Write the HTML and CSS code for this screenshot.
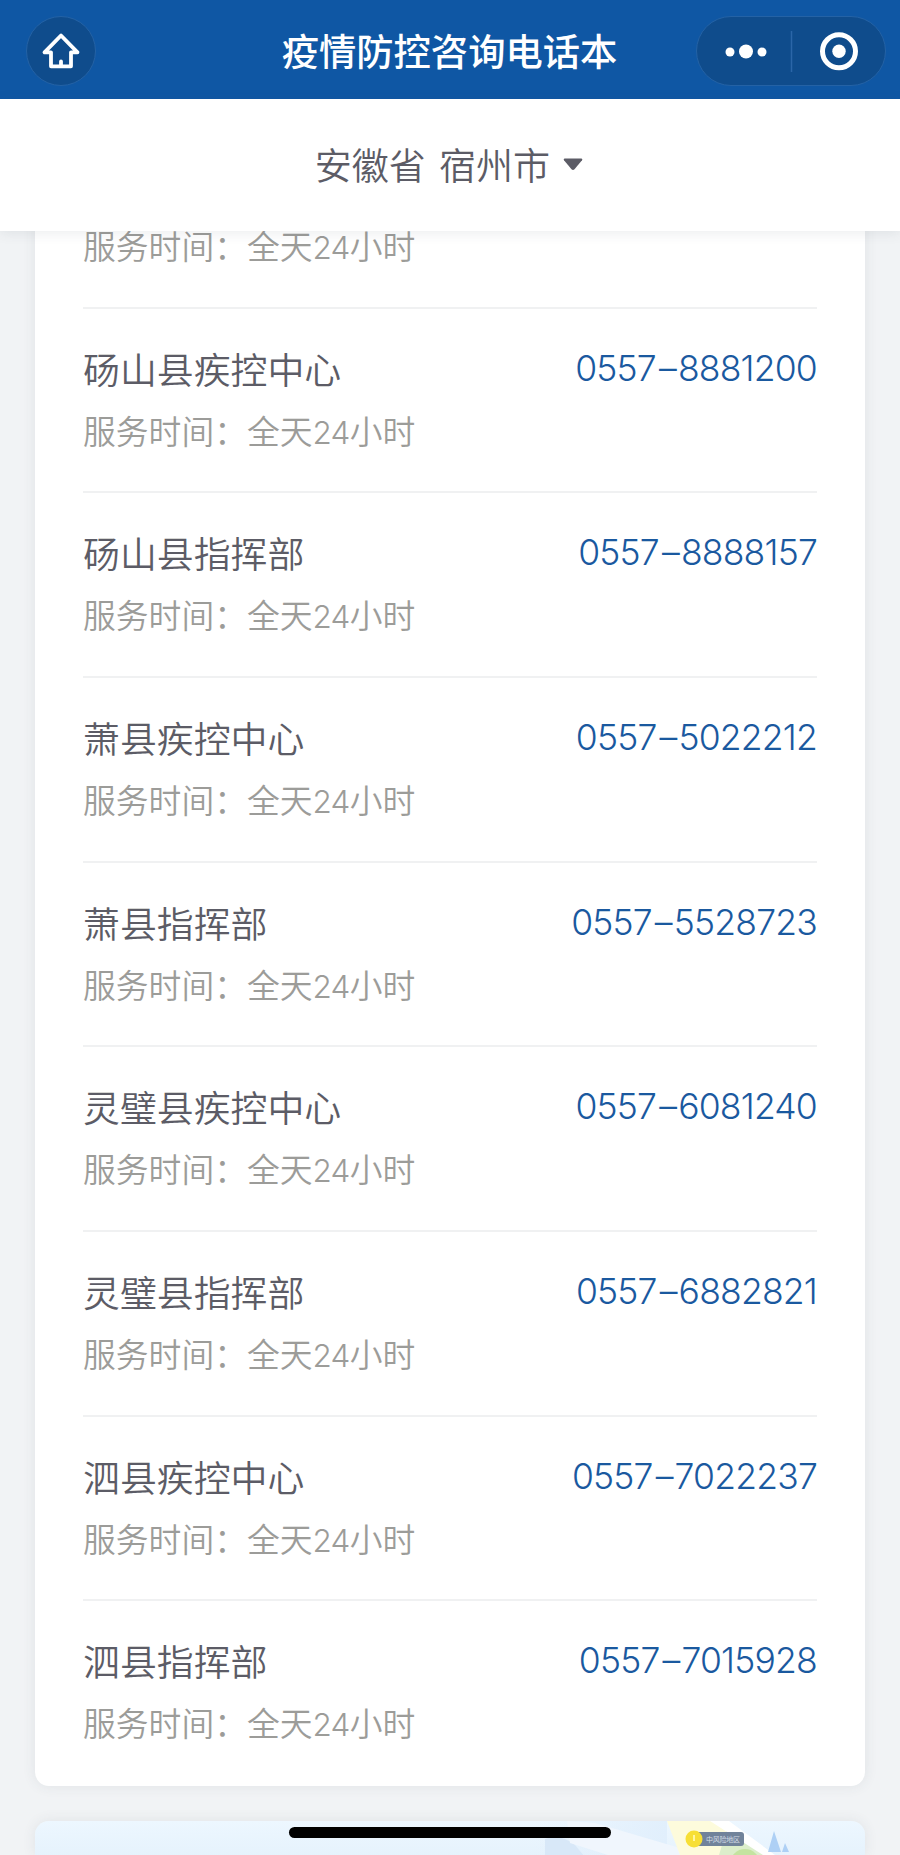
FILE: index.html
```html
<!DOCTYPE html>
<html lang="zh-CN">
<head>
  <meta charset="UTF-8" />
  <meta name="viewport" content="width=device-width, initial-scale=1.0"/>
  <title>疫情防控咨询电话本</title>
  <link rel="stylesheet" href="styles.css">
</head>
<body>
  <header class="navbar">
    <button type="button" class="home-btn" aria-label="首页">
      <svg width="40" height="40" viewBox="0 0 40 40" fill="none" stroke="#fff" stroke-width="3.8" stroke-linejoin="round" stroke-linecap="round">
        <path d="M20 4.5 L3.5 21.3 H10 V35.3 H30 V21.3 H36.5 Z"/>
        <path d="M20 30.5 V35"/>
      </svg>
    </button>
    <h1>疫情防控咨询电话本</h1>
    <div class="capsule">
      <svg width="188" height="68" viewBox="0 0 188 68">
        <g fill="#fff">
          <circle cx="33" cy="35" r="4.5"/>
          <circle cx="49" cy="34.5" r="7"/>
          <circle cx="65" cy="35" r="4.5"/>
          <circle cx="142" cy="34.3" r="6.7"/>
        </g>
        <path d="M94.5 14 V55" stroke="#2b66a8" stroke-width="1.5"/>
        <circle cx="142" cy="34.3" r="16.5" fill="none" stroke="#fff" stroke-width="5"/>
      </svg>
    </div>
  </header>

  <div class="region">
    <span>安徽省 宿州市</span>
    <svg class="caret" width="20" height="13" viewBox="0 0 20 13"><path d="M1.5 .5 H18.5 Q20 1 19 2.3 L11.5 11.3 Q10 12.7 8.5 11.3 L1 2.3 Q0 1 1.5 .5Z" fill="#5c5c66"/></svg>
  </div>

  <main class="content">
    <ul class="card">
      <li class="row first">
        <p class="hours">服务时间：全天<span class="num">24</span>小时</p>
      </li>
      <li class="row">
        <div class="line"><span class="name">砀山县疾控中心</span><a class="tel">0557<i>–</i>8881200</a></div>
        <p class="hours">服务时间：全天<span class="num">24</span>小时</p>
      </li>
      <li class="row">
        <div class="line"><span class="name">砀山县指挥部</span><a class="tel">0557<i>–</i>8888157</a></div>
        <p class="hours">服务时间：全天<span class="num">24</span>小时</p>
      </li>
      <li class="row">
        <div class="line"><span class="name">萧县疾控中心</span><a class="tel">0557<i>–</i>5022212</a></div>
        <p class="hours">服务时间：全天<span class="num">24</span>小时</p>
      </li>
      <li class="row">
        <div class="line"><span class="name">萧县指挥部</span><a class="tel">0557<i>–</i>5528723</a></div>
        <p class="hours">服务时间：全天<span class="num">24</span>小时</p>
      </li>
      <li class="row">
        <div class="line"><span class="name">灵璧县疾控中心</span><a class="tel">0557<i>–</i>6081240</a></div>
        <p class="hours">服务时间：全天<span class="num">24</span>小时</p>
      </li>
      <li class="row">
        <div class="line"><span class="name">灵璧县指挥部</span><a class="tel">0557<i>–</i>6882821</a></div>
        <p class="hours">服务时间：全天<span class="num">24</span>小时</p>
      </li>
      <li class="row">
        <div class="line"><span class="name">泗县疾控中心</span><a class="tel">0557<i>–</i>7022237</a></div>
        <p class="hours">服务时间：全天<span class="num">24</span>小时</p>
      </li>
      <li class="row">
        <div class="line"><span class="name">泗县指挥部</span><a class="tel">0557<i>–</i>7015928</a></div>
        <p class="hours">服务时间：全天<span class="num">24</span>小时</p>
      </li>
    </ul>

    <div class="banner">
      <svg width="830" height="60" viewBox="0 0 830 60">
        <defs>
          <linearGradient id="sky" x1="0" y1="0" x2="0" y2="1">
            <stop offset="0" stop-color="#edf7ff"/>
            <stop offset="1" stop-color="#e0effb"/>
          </linearGradient>
          <linearGradient id="haze" x1="0" y1="0" x2="1" y2="0">
            <stop offset="0" stop-color="#e1effc" stop-opacity="0"/>
            <stop offset="1" stop-color="#e1effc"/>
          </linearGradient>
        </defs>
        <rect width="830" height="60" fill="url(#sky)"/>
        <path d="M500 0 H632 V60 H500Z" fill="url(#haze)"/>
        <path d="M510 18 Q525 12 540 24 L570 60 H510Z" fill="#d8e8f8"/>
        <path d="M532 0 L560 2 L655 30 V60 L535 22Z" fill="#f0f6fd"/>
        <path d="M632 0 H692 L735 34 H645Z" fill="#fdfbdc"/>
        <path d="M692 8 L735 34 H684Z" fill="#dceecb"/>
        <path d="M675 0 H694 L740 34 H728Z" fill="#fff"/>
        <circle cx="710" cy="43" r="15" fill="#c4e3a0"/>
        <path d="M739 10 L746 31 H733Z M750 22 L754 31 H747Z" fill="#aed0f5"/>
        <rect x="660" y="11" width="49" height="14" rx="3" fill="#71839a"/>
        <circle cx="659" cy="18" r="8.5" fill="#f7df35"/>
        <path d="M659 14 V20" stroke="#fff6a0" stroke-width="2"/>
        <text class="tag" x="671" y="21" textLength="34">中风险地区</text>
      </svg>
    </div>
  </main>

  <div class="home-indicator"></div>
</body>
</html>
```
FILE: styles.css
```css
:root {
  --nav: #0f57a4;
  --nav-dark: #0f4c8c;
  --bg: #f1f3f5;
  --text: #5c5c66;
  --muted: #9c9c99;
  --link: #1a599f;
}

* {
  box-sizing: border-box;
  margin: 0;
  padding: 0;
}

body {
  height: 1855px;
  overflow: hidden;
  display: flex;
  flex-direction: column;
  background: var(--bg);
  color: var(--text);
  font-family: "Noto Sans CJK SC", sans-serif;
}

.navbar {
  height: 98.5px;
  flex-shrink: 0;
  padding: 3px 14px 0 26px;
  display: grid;
  grid-template-columns: 190px 1fr 190px;
  align-items: center;
  background: var(--nav);
  color: #fff;
}

.navbar h1 {
  font-size: 37.3px;
  font-weight: 500;
  line-height: 56px;
  text-align: center;
  white-space: nowrap;
  justify-self: center;
  margin: -2px 0 0 -13px;
}

.home-btn {
  width: 70px;
  height: 70px;
  display: flex;
  align-items: center;
  justify-content: center;
  border: 1px solid #2462a5;
  border-radius: 50%;
  background: var(--nav-dark);
}

.capsule {
  width: 190px;
  height: 70px;
  border: 1px solid #2462a5;
  border-radius: 35px;
  background: var(--nav-dark);
}

.capsule svg {
  display: block;
}

.region {
  height: 132.5px;
  flex-shrink: 0;
  padding: 0 2px 2px 0;
  display: flex;
  align-items: center;
  justify-content: center;
  gap: 13px;
  background: #fff;
  font-size: 37px;
  font-weight: 350;
  word-spacing: 5px;
  position: relative;
  z-index: 1;
  box-shadow: 0 2px 12px rgba(60, 75, 90, 0.1);
}

.caret {
  margin-top: 2px;
}

/* list is scrolled, the first row is partly under the header */
.content {
  flex: 1;
  min-height: 0;
  padding: 0 35px;
  display: flex;
  flex-direction: column;
  justify-content: flex-end;
  gap: 35px;
}

.card {
  flex-shrink: 0;
  list-style: none;
  padding: 0 48px;
  background: #fff;
  border-radius: 0 0 14px 14px;
  box-shadow: 0 0 14px rgba(60, 70, 80, 0.09);
}

.row {
  height: 184.7px;
  padding-top: 31px;
  border-bottom: 2px solid #f0f1f2;
}

.row.first {
  height: 87.7px;
  padding-top: 0;
}

.row:last-child {
  border-bottom: none;
}

.line {
  display: flex;
  justify-content: space-between;
  height: 56px;
  line-height: 56px;
}

.name {
  font-size: 36.9px;
  font-weight: 350;
}

.tel {
  padding-top: 1px;
  color: var(--link);
  font-family: Inter, sans-serif;
  font-size: 35.5px;
  font-weight: 350;
  letter-spacing: -0.8px;
}

.tel i {
  font-style: normal;
  margin: 0 2px 0 3px;
}

.hours {
  margin-top: 10px;
  color: var(--muted);
  font-size: 32.8px;
  font-weight: 350;
  line-height: 48px;
}

.num {
  font-family: Inter, sans-serif;
  font-size: 31.5px;
  font-weight: 300;
  letter-spacing: -0.8px;
}

.banner {
  height: 34px;
  flex-shrink: 0;
  overflow: hidden;
  border-radius: 14px 14px 0 0;
  box-shadow: 0 0 14px rgba(60, 70, 80, 0.09);
}

.tag {
  font-size: 7px;
  fill: #d3dce6;
}

.home-indicator {
  position: absolute;
  left: 289px;
  top: 1827px;
  width: 322px;
  height: 11px;
  border-radius: 6px;
  background: #000;
}
```
